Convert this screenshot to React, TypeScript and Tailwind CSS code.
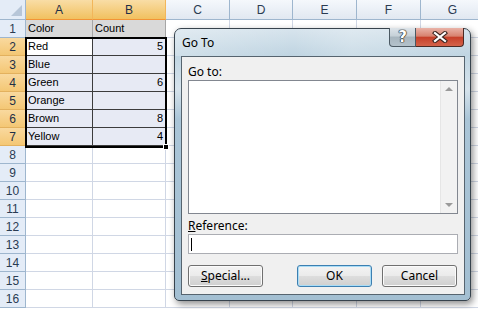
import React from 'react';

const COLS = [
  { key: 'A', w: 'w-[67px]', sel: true },
  { key: 'B', w: 'w-[73px]', sel: true },
  { key: 'C', w: 'w-[64px]', sel: false },
  { key: 'D', w: 'w-[63px]', sel: false },
  { key: 'E', w: 'w-[64px]', sel: false },
  { key: 'F', w: 'w-[64px]', sel: false },
  { key: 'G', w: 'w-[64px]', sel: false },
];

const DATA: Record<number, [string, string]> = {
  1: ['Color', 'Count'],
  2: ['Red', '5'],
  3: ['Blue', ''],
  4: ['Green', '6'],
  5: ['Orange', ''],
  6: ['Brown', '8'],
  7: ['Yellow', '4'],
};

const ROWS = Array.from({ length: 16 }, (_, i) => i + 1);

function ColHeader() {
  return (
    <div className="flex h-[20px]">
      {/* corner */}
      <div className="relative w-[26px] shrink-0 border-r border-b border-[#9eb6ce] bg-[#e4ecf7]">
        <div className="absolute right-[3px] bottom-[3px] w-0 h-0 border-l-[11px] border-l-transparent border-b-[11px] border-b-[#b7c6d8]" />
      </div>
      {COLS.map((c) => (
        <div
          key={c.key}
          className={`${c.w} shrink-0 flex items-center justify-center border-r border-b text-[12px] ${
            c.sel
              ? 'bg-[linear-gradient(#f9dda6,#f1c15f)] border-r-[#f2b65a] border-b-[#f29436] text-[#1e2f47]'
              : 'bg-[linear-gradient(#f5f8fc,#e1e8f1)] border-r-[#9eb6ce] border-b-[#9eb6ce] text-[#2a3b52]'
          }`}
        >
          {c.key}
        </div>
      ))}
    </div>
  );
}

function Row({ n }: { n: number }) {
  const sel = n >= 2 && n <= 7;
  const d = DATA[n];
  return (
    <div className="flex h-[18px]">
      <div
        className={`w-[26px] shrink-0 flex items-center justify-center border-r border-b text-[12px] ${
          sel
            ? 'bg-[linear-gradient(#f9d99f,#f4c774)] border-r-[#f29436] border-b-[#e3b15e] text-[#1e2f47]'
            : 'bg-[#e4ecf7] border-r-[#9eb6ce] border-b-[#9eb6ce] text-[#2a3b52]'
        }`}
      >
        {n}
      </div>
      {COLS.map((c, i) => {
        let bg = 'bg-white';
        if (n === 1 && i < 2) bg = 'bg-[#d9d9d9]';
        if (sel && i < 2 && !(n === 2 && i === 0)) bg = 'bg-[#e7eaf4]';
        const dark = n <= 7 && i < 2;
        const text = d && i < 2 ? d[i] : '';
        return (
          <div
            key={c.key}
            className={`${c.w} shrink-0 border-r border-b ${bg} ${
              dark && n >= 2 ? 'border-[#3c3c3c]' : dark ? 'border-r-[#a6a6a6] border-b-[#3c3c3c]' : 'border-[#d0d7e5]'
            } px-[2px] flex items-center text-[11px] text-black ${i === 1 && n > 1 ? 'justify-end' : ''}`}
          >
            {text}
          </div>
        );
      })}
    </div>
  );
}

function Arrow({ up }: { up?: boolean }) {
  return (
    <svg width="8" height="5" viewBox="0 0 8 5">
      <path d={up ? 'M0 5 L4 1 L8 5 Z' : 'M0 0 L8 0 L4 4 Z'} fill="#9a9a9a" />
    </svg>
  );
}

function WinButton({ children, focused }: { children: React.ReactNode; focused?: boolean }) {
  return (
    <div
      className={`w-[75px] h-[22px] rounded-[3px] border flex items-center justify-center text-[12px] text-black bg-[linear-gradient(#f3f3f3_0%,#ebebeb_48%,#dddddd_52%,#cfcfcf_100%)] ${
        focused ? 'border-[#3c7fb1] shadow-[inset_0_0_0_1px_#a9dcf6]' : 'border-[#707070] shadow-[inset_0_0_0_1px_#fbfbfb]'
      }`}
    >
      {children}
    </div>
  );
}

function Dialog() {
  return (
    <div className="absolute left-[174px] top-[28px] w-[297px] h-[273px] rounded-t-[7px] rounded-b-[5px] border border-[#37434d] bg-[linear-gradient(180deg,#d7e4ed_0px,#c0d5e2_26px,#d6e3ec_60px,#aac5d7_90px,#a3bfd2_100%)] shadow-[2px_3px_7px_rgba(0,0,0,0.45)] flex flex-col font-['Noto_Sans',sans-serif]">
      {/* title bar */}
      <div className="relative h-[27px] shrink-0 flex items-center pl-[7px] bg-[linear-gradient(90deg,rgba(255,255,255,0.25),rgba(255,255,255,0)_40%,rgba(255,255,255,0.2)_60%,rgba(255,255,255,0))] rounded-t-[6px]">
        <span className="text-[12px] text-black leading-none">Go To</span>
        <div className="absolute top-[-1px] right-[6px] flex h-[19px]">
          <div className="w-[27px] h-full rounded-bl-[4px] border border-t-0 border-[#4b5963] bg-[linear-gradient(#dde4e9_0%,#c5d0d7_45%,#a7b5be_50%,#b4c2cb_100%)] flex items-center justify-center">
            <span className="text-[15px] font-bold text-white leading-none font-['DejaVu_Sans',sans-serif] [text-shadow:0_0_1px_#222,0_0_1px_#222,0_0_1px_#222,0_0_1px_#222]">?</span>
          </div>
          <div className="w-[48px] h-full rounded-br-[4px] border border-t-0 border-l-0 border-[#4b2a24] bg-[linear-gradient(#e9b3a8_0%,#d8826f_45%,#c7402a_52%,#d4634a_100%)] flex items-center justify-center">
            <svg width="16" height="12" viewBox="0 0 16 12">
              <path d="M3 2 L13 10 M13 2 L3 10" stroke="#3b2520" strokeWidth="4.2" strokeLinecap="square" />
              <path d="M3 2 L13 10 M13 2 L3 10" stroke="#ffffff" strokeWidth="2.2" strokeLinecap="square" />
            </svg>
          </div>
        </div>
      </div>

      {/* client area */}
      <div className="ml-[6px] mr-[5px] mb-[5px] flex-1 border border-[#56646f] bg-[#f0f0f0] px-[6px] pt-[6px] flex flex-col">
        <div className="h-[17px] leading-[17px] text-[12px] text-black">Go to:</div>
        <div className="h-[134px] border border-[#828790] bg-white flex justify-end">
          <div className="w-[17px] h-full bg-[#f2f2f2] border-l border-[#e6e6e6] flex flex-col items-center justify-between py-[5px]">
            <Arrow up />
            <Arrow />
          </div>
        </div>
        <div className="mt-[3px] h-[17px] leading-[17px] text-[12px] text-black">
          <span className="underline">R</span>eference:
        </div>
        <div className="h-[20px] border border-[#abadb3] bg-white flex items-center pl-[2px]">
          <div className="w-px h-[13px] bg-black" />
        </div>
        <div className="mt-[11px] flex justify-between pr-[1px]">
          <WinButton>
            <span className="underline">S</span>pecial...
          </WinButton>
          <div className="flex gap-[10px]">
            <WinButton focused>OK</WinButton>
            <WinButton>Cancel</WinButton>
          </div>
        </div>
      </div>
    </div>
  );
}

export default function App() {
  return (
    <div className="relative w-[478px] h-[309px] overflow-hidden bg-white font-['Liberation_Sans',Arial,sans-serif]">
      <ColHeader />
      {ROWS.map((n) => (
        <Row key={n} n={n} />
      ))}
      {/* selection outline A2:B7 */}
      <div className="absolute left-[25px] top-[37px] w-[142px] h-[111px] border-2 border-black" />
      <div className="absolute left-[163px] top-[144px] w-[6px] h-[6px] bg-black border border-white" />
      <Dialog />
    </div>
  );
}
